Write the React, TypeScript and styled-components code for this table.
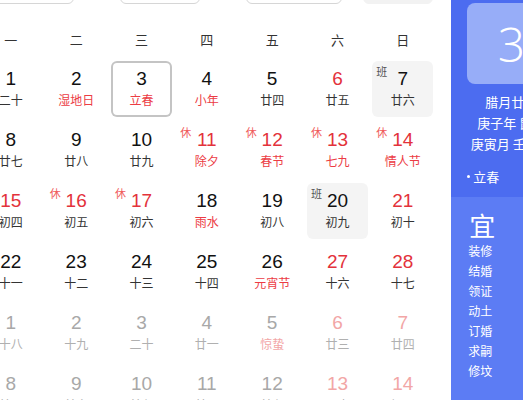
import React from "react";
import styled, { createGlobalStyle } from "styled-components";

const GlobalStyle = createGlobalStyle`
  html, body {
    margin: 0;
    padding: 0;
    background: #ffffff;
    overflow: hidden;
    font-family: "Liberation Sans", Arial, "Noto Sans CJK SC", sans-serif;
  }
`;

const Page = styled.div`
  display: flex;
  align-items: flex-start;
  width: 523px;
  height: 400px;
  overflow: hidden;
`;

const Main = styled.div`
  flex: none;
  width: 453.33px;
  margin-left: -19.67px;
`;

const Toolbar = styled.div`
  display: flex;
  height: 30px;
  margin-top: -26px;
`;

const ToolBox = styled.div<{ $w: number; $ml: number; $filled?: boolean }>`
  flex: none;
  width: ${(p) => p.$w}px;
  margin-left: ${(p) => p.$ml}px;
  box-sizing: border-box;
  border-radius: 6px;
  border: 1px solid ${(p) => (p.$filled ? "#f2f2f2" : "#d6d6d6")};
  background: ${(p) => (p.$filled ? "#f2f2f2" : "#ffffff")};
`;

const WeekHeader = styled.div`
  display: grid;
  grid-template-columns: repeat(7, 61px);
  column-gap: 4.33px;
  padding-top: 27px;
  margin-bottom: 12px;
`;

const WeekDay = styled.div`
  text-align: center;
  font-size: 13px;
  line-height: 18px;
  color: #333;
  font-family: "Noto Sans CJK SC", sans-serif;
`;

const Grid = styled.div`
  display: grid;
  grid-template-columns: repeat(7, 61px);
  grid-auto-rows: 56px;
  column-gap: 4.33px;
  row-gap: 5px;
`;

type Tone = "normal" | "red" | "gray" | "pink";

const toneColor = (t: Tone) =>
  t === "red" ? "#e3323b" : t === "gray" ? "#a8a8a8" : t === "pink" ? "#f2a6a6" : "#111";
const lunarColor = (t: Tone) =>
  t === "red" ? "#ec3c44" : t === "gray" ? "#b0b0b0" : t === "pink" ? "#f2a6a6" : "#333";

const Cell = styled.div<{ $today?: boolean; $work?: boolean }>`
  position: relative;
  display: flex;
  flex-direction: column;
  align-items: center;
  border-radius: 6px;
  background: ${(p) => (p.$work ? "#f4f4f4" : "transparent")};
  box-shadow: ${(p) => (p.$today ? "inset 0 0 0 2px #c4c4c4" : "none")};
`;

const DayNum = styled.div<{ $tone: Tone }>`
  padding-top: 7px;
  font-size: 19px;
  line-height: 22px;
  color: ${(p) => toneColor(p.$tone)};
`;

const Lunar = styled.div<{ $tone: Tone }>`
  margin-top: 2px;
  font-size: 12px;
  line-height: 16px;
  white-space: nowrap;
  color: ${(p) => lunarColor(p.$tone)};
  font-family: "Noto Sans CJK SC", sans-serif;
`;

const Badge = styled.span<{ $kind: "休" | "班" }>`
  position: absolute;
  top: 4px;
  left: 4px;
  font-size: 11px;
  line-height: 13px;
  color: ${(p) => (p.$kind === "休" ? "#ef5b5b" : "#555")};
  font-family: "Noto Sans CJK SC", sans-serif;
`;

const Side = styled.div`
  flex: none;
  align-self: stretch;
  width: 120px;
  margin-left: 17.67px;
  display: flex;
  flex-direction: column;
  font-family: "Noto Sans CJK SC", sans-serif;
  color: #fff;
`;

const SideTop = styled.div`
  flex: none;
  height: 197px;
  box-sizing: border-box;
  padding-top: 3px;
  background: #4c6cf0;
  display: flex;
  flex-direction: column;
`;

const DateBox = styled.div`
  flex: none;
  margin: 0 16px;
  height: 81px;
  border-radius: 8px;
  background: #97adf8;
  display: flex;
  align-items: center;
  justify-content: center;
  font-family: "Open Sans", "Liberation Sans", sans-serif;
  font-weight: 300;
  font-size: 48px;
  color: #fff;
`;

const LunarLines = styled.div`
  margin-top: 7px;
  display: flex;
  flex-direction: column;
  align-items: center;
`;

const LunarLine = styled.div`
  font-size: 13px;
  line-height: 21px;
  white-space: nowrap;
`;

const Term = styled.div`
  margin-top: 12px;
  padding-left: 16px;
  font-size: 13px;
  line-height: 21px;
  display: flex;
  align-items: center;
`;

const Dot = styled.span`
  width: 3px;
  height: 3px;
  border-radius: 50%;
  background: #fff;
  margin-right: 3px;
`;

const SideBottom = styled.div`
  flex: 1;
  background: #5c7cf4;
  padding: 12px 0 0 17px;
  display: flex;
  flex-direction: column;
`;

const YiTitle = styled.div`
  font-size: 26px;
  line-height: 32px;
  margin-left: 1px;
`;

const YiItem = styled.div`
  font-size: 12px;
  line-height: 20px;
`;

type Day = {
  n: number;
  l: string;
  nt?: Tone;
  lt?: Tone;
  b?: "休" | "班";
  today?: boolean;
  work?: boolean;
};

const days: Day[] = [
  { n: 1, l: "二十" },
  { n: 2, l: "湿地日", lt: "red" },
  { n: 3, l: "立春", lt: "red", today: true },
  { n: 4, l: "小年", lt: "red" },
  { n: 5, l: "廿四" },
  { n: 6, l: "廿五", nt: "red" },
  { n: 7, l: "廿六", b: "班", work: true },
  { n: 8, l: "廿七" },
  { n: 9, l: "廿八" },
  { n: 10, l: "廿九" },
  { n: 11, l: "除夕", nt: "red", lt: "red", b: "休" },
  { n: 12, l: "春节", nt: "red", lt: "red", b: "休" },
  { n: 13, l: "七九", nt: "red", lt: "red", b: "休" },
  { n: 14, l: "情人节", nt: "red", lt: "red", b: "休" },
  { n: 15, l: "初四", nt: "red", b: "休" },
  { n: 16, l: "初五", nt: "red", b: "休" },
  { n: 17, l: "初六", nt: "red", b: "休" },
  { n: 18, l: "雨水", lt: "red" },
  { n: 19, l: "初八" },
  { n: 20, l: "初九", b: "班", work: true },
  { n: 21, l: "初十", nt: "red" },
  { n: 22, l: "十一" },
  { n: 23, l: "十二" },
  { n: 24, l: "十三" },
  { n: 25, l: "十四" },
  { n: 26, l: "元宵节", lt: "red" },
  { n: 27, l: "十六", nt: "red" },
  { n: 28, l: "十七", nt: "red" },
  { n: 1, l: "十八", nt: "gray", lt: "gray" },
  { n: 2, l: "十九", nt: "gray", lt: "gray" },
  { n: 3, l: "二十", nt: "gray", lt: "gray" },
  { n: 4, l: "廿一", nt: "gray", lt: "gray" },
  { n: 5, l: "惊蛰", nt: "gray", lt: "pink" },
  { n: 6, l: "廿三", nt: "pink", lt: "gray" },
  { n: 7, l: "廿四", nt: "pink", lt: "gray" },
  { n: 8, l: "廿五", nt: "gray", lt: "gray" },
  { n: 9, l: "廿六", nt: "gray", lt: "gray" },
  { n: 10, l: "廿七", nt: "gray", lt: "gray" },
  { n: 11, l: "廿八", nt: "gray", lt: "gray" },
  { n: 12, l: "廿九", nt: "gray", lt: "gray" },
  { n: 13, l: "三十", nt: "pink", lt: "gray" },
  { n: 14, l: "初一", nt: "pink", lt: "gray" },
];

const weekDays = ["一", "二", "三", "四", "五", "六", "日"];
const yi = ["装修", "结婚", "领证", "动土", "订婚", "求嗣", "修坟"];

export default function App() {
  return (
    <Page>
      <GlobalStyle />
      <Main>
        <Toolbar>
          <ToolBox $w={94} $ml={0} />
          <ToolBox $w={80} $ml={46} />
          <ToolBox $w={96} $ml={46} />
          <ToolBox $w={70} $ml={21} $filled />
        </Toolbar>
        <WeekHeader>
          {weekDays.map((w) => (
            <WeekDay key={w}>{w}</WeekDay>
          ))}
        </WeekHeader>
        <Grid>
          {days.map((d, i) => (
            <Cell key={i} $today={d.today} $work={d.work}>
              {d.b && <Badge $kind={d.b}>{d.b}</Badge>}
              <DayNum $tone={d.nt ?? "normal"}>{d.n}</DayNum>
              <Lunar $tone={d.lt ?? "normal"}>{d.l}</Lunar>
            </Cell>
          ))}
        </Grid>
      </Main>
      <Side>
        <SideTop>
          <DateBox>3</DateBox>
          <LunarLines>
            <LunarLine>腊月廿二</LunarLine>
            <LunarLine>庚子年 鼠年</LunarLine>
            <LunarLine>庚寅月 壬午日</LunarLine>
          </LunarLines>
          <Term>
            <Dot />
            立春
          </Term>
        </SideTop>
        <SideBottom>
          <YiTitle>宜</YiTitle>
          {yi.map((y) => (
            <YiItem key={y}>{y}</YiItem>
          ))}
        </SideBottom>
      </Side>
    </Page>
  );
}
